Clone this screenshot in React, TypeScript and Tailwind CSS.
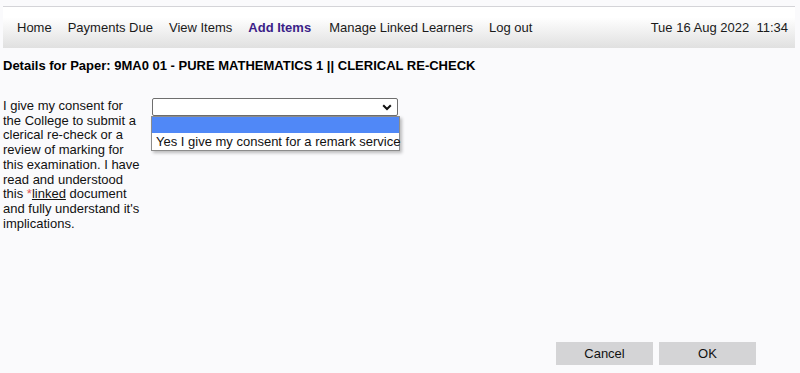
const NAV = [
  { label: 'Home', active: false },
  { label: 'Payments Due', active: false },
  { label: 'View Items', active: false },
  { label: 'Add Items', active: true },
  { label: 'Manage Linked Learners', active: false },
  { label: 'Log out', active: false },
]

export default function App() {
  return (
    <div className="w-[800px] h-[373px] bg-[#fafafc] text-black font-['Liberation_Sans',Arial,sans-serif] text-[13px] flex flex-col overflow-hidden">

      {/* Top nav */}
      <div className="mx-[3px] mt-[6px] w-[792px] h-[42px] border-t border-[#d4d4d8] bg-gradient-to-b from-[#ffffff] from-25% to-[#e0e0e0] flex items-center justify-between pl-[14px] pr-[7px]">
        <div className="flex items-center gap-[16px]">
          {NAV.map((n) => (
            <span
              key={n.label}
              className={n.active ? 'font-bold text-[#3b1e88] mr-[2px]' : 'text-[#1a1a1a]'}
            >
              {n.label}
            </span>
          ))}
        </div>
        <span className="text-[#1a1a1a] whitespace-pre">Tue 16 Aug 2022  11:34</span>
      </div>

      {/* Heading */}
      <div className="mt-[10px] pl-[3px] font-bold leading-[15px]">
        Details for Paper: 9MA0 01 - PURE MATHEMATICS 1 || CLERICAL RE-CHECK
      </div>

      {/* Consent row */}
      <div className="mt-[26px] flex items-start">
        <p className="w-[143px] pl-[3px] leading-[14.7px] text-[#111]">
          I give my consent for the College to submit a clerical re-check or a review of marking for
          this examination. I have read and understood this <span className="text-[#e05555]">*</span><span className="underline">linked</span> document and fully understand it's implications.
        </p>

        <div className="relative ml-[9px] -mt-[1px]">
          <div className="w-[246px] h-[18px] bg-white border border-[#6e6e6e] rounded-[2px] flex items-center justify-end pr-[5px]">
            <svg width="10" height="7" viewBox="0 0 10 7" fill="none">
              <path d="M1.2 1.2 5 5 8.8 1.2" stroke="#111" strokeWidth="2" />
            </svg>
          </div>

          {/* Open option list */}
          <div className="absolute -left-px top-[18px] w-[249px] bg-white border border-[#8c8c8c] shadow-[2px_2px_3px_rgba(0,0,0,0.25)]">
            <div className="h-[16px] bg-[#5088f7]" />
            <div className="h-[17px] pl-[4px] leading-[17px] text-[#111] whitespace-nowrap">
              Yes I give my consent for a remark service
            </div>
          </div>
        </div>
      </div>

      {/* Buttons */}
      <div className="mt-auto mb-[8px] flex justify-end gap-[6px] pr-[44px]">
        <button className="w-[97px] h-[23px] bg-[#d4d4d6] text-[#111]">Cancel</button>
        <button className="w-[97px] h-[23px] bg-[#d4d4d6] text-[#111]">OK</button>
      </div>
    </div>
  )
}
